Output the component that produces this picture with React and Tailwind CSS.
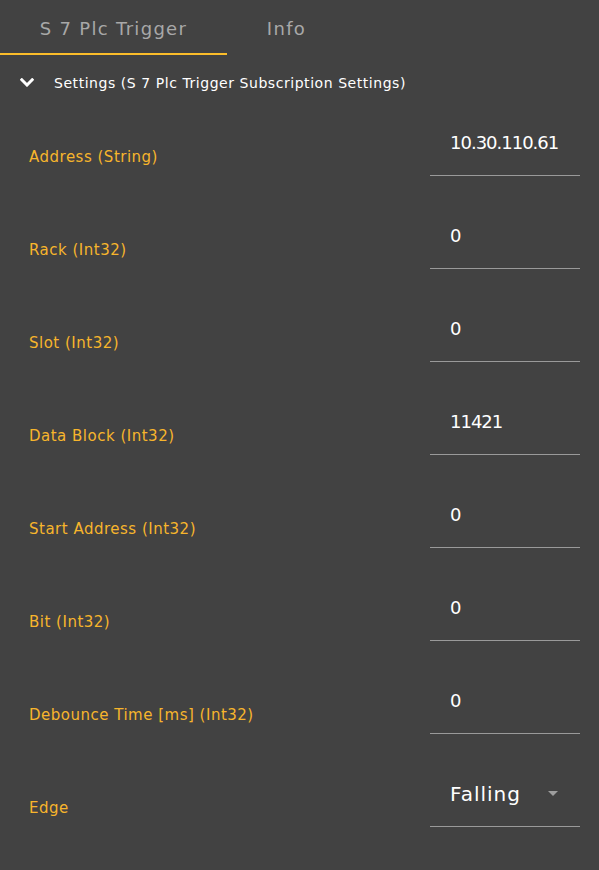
import React from "react";

const rows = [
  { label: "Address (String)", value: "10.30.110.61" },
  { label: "Rack (Int32)", value: "0" },
  { label: "Slot (Int32)", value: "0" },
  { label: "Data Block (Int32)", value: "11421" },
  { label: "Start Address (Int32)", value: "0" },
  { label: "Bit (Int32)", value: "0" },
  { label: "Debounce Time [ms] (Int32)", value: "0" },
];

function Row({ label, value, select }) {
  return (
    <div className="flex h-[93px] items-start justify-between">
      <div className="mt-[44px] pl-[29px] text-[15px] leading-[18px] tracking-[0.5px] text-[#f7b52c]">{label}</div>
      <div className="mr-[19px] flex h-[72px] w-[150px] items-start border-b border-[#9a9a9a] pl-[20px] pr-[22px]">
        <span
          className={
            "mt-[27px] leading-[24px] text-white " +
            (select ? "text-[20px] tracking-[1px]" : "text-[18px] tracking-[-1px]")
          }
        >
          {value}
        </span>
        {select && (
          <svg className="ml-auto mt-[36px]" width="10" height="5" viewBox="0 0 10 5">
            <path d="M0 0 L10 0 L5 5 Z" fill="#9e9e9e" />
          </svg>
        )}
      </div>
    </div>
  );
}

export default function App() {
  return (
    <div className="min-h-[870px] w-[599px] bg-[#424242] pb-[22px]" style={{ fontFamily: '"DejaVu Sans", sans-serif' }}>
      <div className="flex h-[55px]">
        <div className="flex w-[227px] items-center justify-center border-b-2 border-[#fbbd2a] pt-[4px] text-[18px] tracking-[1.3px] text-[#a8a8a8]">
          S 7 Plc Trigger
        </div>
        <div className="flex w-[119px] items-center justify-center pt-[2px] text-[18px] tracking-[1.3px] text-[#a8a8a8]">
          Info
        </div>
      </div>
      <div className="flex h-[49px] items-start pt-[19px]">
        <svg className="ml-[20px] mt-[4px]" width="14" height="9" viewBox="0 0 14 9">
          <path d="M1.8 1.8 L7 7 L12.2 1.8" fill="none" stroke="#ffffff" strokeWidth="3" strokeLinecap="square" />
        </svg>
        <span className="ml-[20px] text-[14px] leading-[18px] tracking-[0.55px] text-white">
          Settings (S 7 Plc Trigger Subscription Settings)
        </span>
      </div>
      {rows.map((r) => (
        <Row key={r.label} label={r.label} value={r.value} />
      ))}
      <Row label="Edge" value="Falling" select />
    </div>
  );
}
